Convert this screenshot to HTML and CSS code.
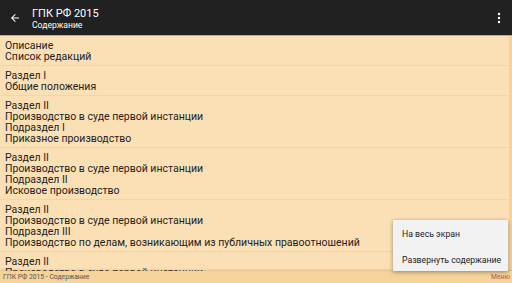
FILE: index.html
```html
<!DOCTYPE html>
<html lang="ru">
<head>
<meta charset="utf-8">
<link rel="stylesheet" href="styles.css">
</head>
<body>
<div class="app">
  <header class="toolbar">
    <svg class="back" width="12" height="12" viewBox="0 0 24 24"><path d="M20 11H7.83l5.59-5.59L12 4l-8 8 8 8 1.41-1.41L7.83 13H20v-2z" fill="#fff"/></svg>
    <div class="titles">
      <div class="title">ГПК РФ 2015</div>
      <div class="subtitle">Содержание</div>
    </div>
    <svg class="more" width="4" height="12" viewBox="0 0 4 12"><circle cx="2" cy="2" r="1.2" fill="#fff"/><circle cx="2" cy="6" r="1.2" fill="#fff"/><circle cx="2" cy="10" r="1.2" fill="#fff"/></svg>
  </header>
  <main class="content">
    <div class="list">
      <div class="item"><div>Описание</div><div>Список редакций</div></div>
      <div class="item"><div>Раздел I</div><div>Общие положения</div></div>
      <div class="item"><div>Раздел II</div><div>Производство в суде первой инстанции</div><div>Подраздел I</div><div>Приказное производство</div></div>
      <div class="item"><div>Раздел II</div><div>Производство в суде первой инстанции</div><div>Подраздел II</div><div>Исковое производство</div></div>
      <div class="item"><div>Раздел II</div><div>Производство в суде первой инстанции</div><div>Подраздел III</div><div>Производство по делам, возникающим из публичных правоотношений</div></div>
      <div class="item"><div>Раздел II</div><div>Производство в суде первой инстанции</div></div>
    </div>
    <div class="scroller"></div>
  </main>
  <footer class="bottombar">
    <span class="caption">ГПК РФ 2015 - Содержание</span>
    <span class="menu-link">Меню</span>
  </footer>
  <div class="popup">
    <div class="popup-item">На весь экран</div>
    <div class="popup-item">Развернуть содержание</div>
  </div>
</div>
</body>
</html>
```

FILE: styles.css
```css
html, body {
  margin: 0;
  padding: 0;
  width: 512px;
  height: 283px;
  overflow: hidden;
  font-family: Roboto, "Noto Sans", sans-serif;
}
.app {
  position: relative;
  width: 512px;
  height: 283px;
  display: flex;
  flex-direction: column;
  background: #fce0b5;
}
.toolbar {
  height: 35px;
  flex: none;
  background: #212121;
  display: flex;
  align-items: center;
  border-bottom: 1px solid #d8a75e;
  color: #fff;
}
.back {
  margin-left: 9px;
  margin-right: 11px;
  margin-top: 1px;
}
.titles {
  flex: 1;
  display: flex;
  flex-direction: column;
  padding-top: 2px;
}
.title {
  font-size: 11px;
  line-height: 13px;
}
.subtitle {
  font-size: 8.6px;
  line-height: 11px;
}
.more {
  margin-right: 11px;
  margin-top: 1px;
}
.content {
  flex: 1;
  display: flex;
  overflow: hidden;
}
.list {
  flex: 1;
}
.scroller {
  width: 3px;
  background: #f8d196;
}
.item {
  padding: 4px 5px 3px;
  border-bottom: 1px solid #f2d4a6;
  font-size: 10.5px;
  line-height: 11px;
  color: #222;
}
.bottombar {
  height: 12px;
  flex: none;
  background: #f6d398;
  box-shadow: 0 -1px 2px rgba(160, 110, 40, 0.35);
  display: flex;
  align-items: center;
  justify-content: space-between;
  padding: 0 2px 0 3px;
  font-size: 6.8px;
  line-height: 10px;
  z-index: 1;
}
.caption {
  color: #555;
}
.menu-link {
  color: #c0504d;
}
.popup {
  position: absolute;
  left: 393px;
  top: 220px;
  width: 115px;
  height: 51px;
  background: #f2f2f2;
  box-shadow: 0 1px 4px rgba(0, 0, 0, 0.4);
  border-radius: 1px;
  z-index: 2;
  display: flex;
  flex-direction: column;
  padding: 9px 0 0 9px;
  gap: 15px;
  box-sizing: border-box;
  font-size: 8.7px;
  line-height: 11px;
  color: #222;
}
```
